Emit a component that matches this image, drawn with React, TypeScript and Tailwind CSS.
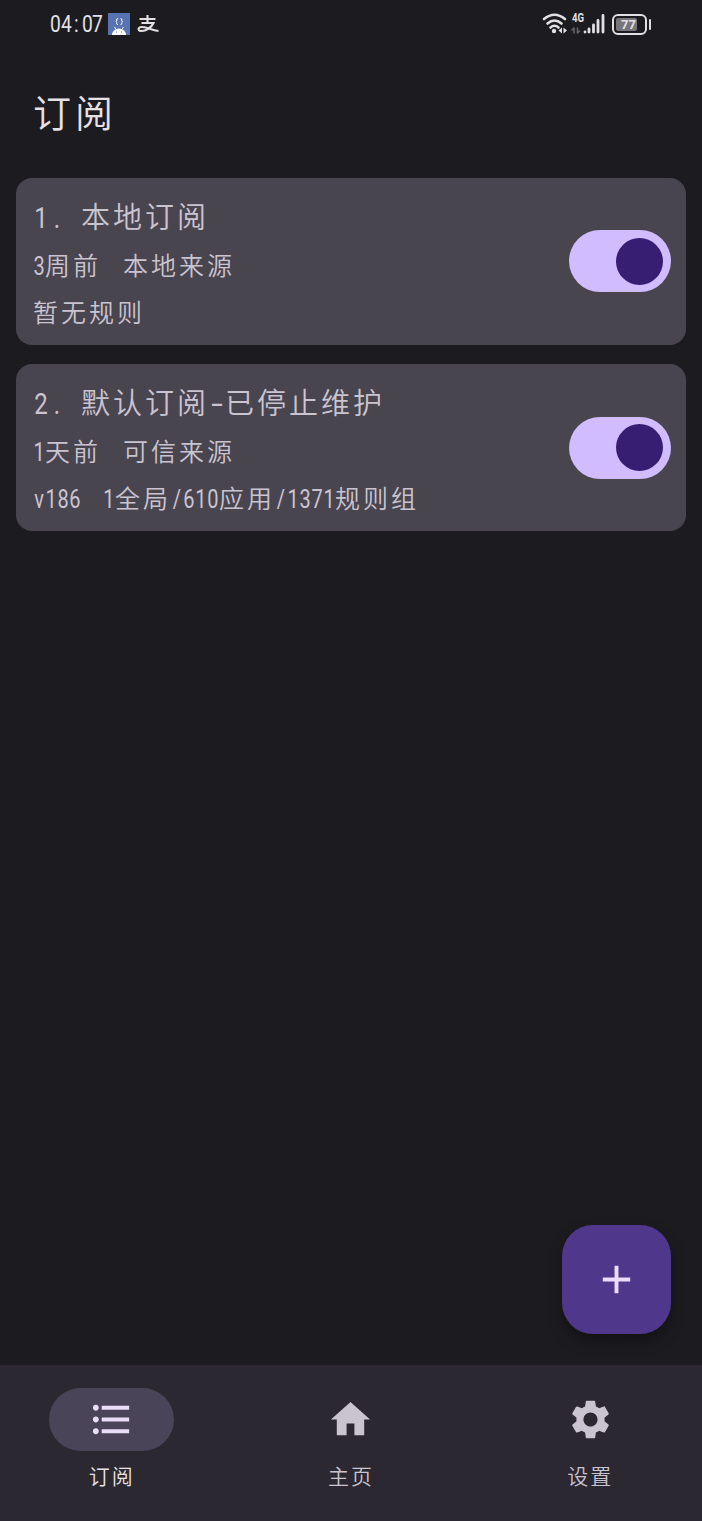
import { useState } from "react";
import clsx from "clsx";
import type { IconType } from "react-icons";
import { MdAdd, MdFormatListBulleted, MdHome, MdSettings } from "react-icons/md";

type Subscription = { title: string; time: string; source: string; rules: string; version?: string };

const subscriptions: Subscription[] = [
    { title: "1. 本地订阅", time: "3周前", source: "本地来源", rules: "暂无规则" },
    {
        title: "2. 默认订阅-已停止维护",
        time: "1天前",
        source: "可信来源",
        version: "v186",
        rules: "1全局/610应用/1371规则组",
    },
];

const tabs: { label: string; icon: IconType }[] = [
    { label: "订阅", icon: MdFormatListBulleted },
    { label: "主页", icon: MdHome },
    { label: "设置", icon: MdSettings },
];

// Latin characters sit in half-width cells next to the full-width Chinese ones
function MixedText({ text, cell, className }: { text: string; cell: string; className?: string }) {
    return (
        <span className={clsx("whitespace-pre", className)}>
            {text.split(/([\x20-\x7e])/).map((part, index) =>
                /^[\x20-\x7e]$/.test(part) ? (
                    <span
                        key={index}
                        className={clsx(
                            "inline-flex justify-center font-[Roboto,sans-serif] font-normal leading-none tracking-normal",
                            part === "-" ? "scale-x-[1.4]" : "scale-x-[0.8]",
                            cell,
                        )}>
                        {part}
                    </span>
                ) : (
                    part
                ),
            )}
        </span>
    );
}

function StatusBar() {
    return (
        <div className="flex h-12 items-center justify-between pl-[50px] pr-[51px] text-[#e3e0e5]">
            <div className="flex items-center">
                <MixedText text="04:07" cell="w-[10.600px] text-[24px]" className="w-[58px] leading-none" />
                <svg width="22" height="22" viewBox="0 0 22 22">
                    <path d="M0 0h22v22H0z" fill="#5873b1" />
                    <path d="M4 22a7 6.500 0 0 1 14 0z" fill="#fff" />
                    <path d="m6.500 14 2 3M15.500 14l-2 3" stroke="#fff" />
                    <path d="M10 5.500q-1.500 0-1.300 1.500v1l-.7.8.7.8v1q0 1 1.300 1M12.500 5.500q1.500 0 1.300 1.500v1l.7.8-.7.8v1q0 1-1.300 1" fill="none" stroke="#fff" />
                    <path d="M8 19h1M13 19h1" stroke="#5873b1" />
                </svg>
                <svg className="ml-[7px]" width="22" height="20" viewBox="0 0 22 20" fill="none" stroke="currentColor" strokeWidth="2.100">
                    <path d="M2.500 5h16M10.500 1v7.500M4.500 9h12C14.500 13.500 9 17.500 3.500 17c-3.500-.8-2-4.500 2-4C11 13.500 15 16.500 21.500 17" />
                </svg>
            </div>
            <div className="flex items-center">
                <svg width="64" height="34" viewBox="0 -5 64 34" fill="none" stroke="currentColor" strokeLinecap="round">
                    <path d="M2 7q10.500-8.500 21 0M5.500 11.500q7-6 14 0M8.500 15.500q4-3.500 8 0" strokeWidth="2.600" />
                    <circle cx="12" cy="19" r="2.200" fill="currentColor" stroke="none" />
                    <path d="m16.500 18.500 3.500-3v6zM21.500 15.500v6l3.500-3z" fill="currentColor" stroke="none" />
                    <path d="M32 16v5M32 16l-2 2M35.500 21v-5M35.500 21l2-2" stroke="#66636a" strokeWidth="1.600" />
                    <path d="M43 19.800v.2M47 17v3M51.500 13v7M56 8.500V20M61 3.500V20" strokeWidth="2.800" />
                    <text
                        x="30"
                        y="10"
                        textLength="12"
                        lengthAdjust="spacingAndGlyphs"
                        className="fill-current stroke-none font-[Roboto,sans-serif] text-[13px] font-bold">
                        4G
                    </text>
                </svg>
                <div className="ml-[6px] flex h-[21px] w-[35px] items-center rounded-[6px] border-2 border-current p-[2px]">
                    <div className="h-full w-[21px] rounded-[2px] bg-[#77747a] pl-[5px] font-[Roboto,sans-serif] text-[13px] font-bold leading-[13px]">
                        77
                    </div>
                </div>
                <div className="ml-[2px] h-[11px] w-[2px] rounded-full bg-current" />
            </div>
        </div>
    );
}

function Toggle() {
    const [checked, setChecked] = useState(true);
    return (
        <button
            type="button"
            role="switch"
            aria-checked={checked}
            onClick={() => setChecked(!checked)}
            className={clsx(
                "flex h-[62px] w-[102px] flex-none items-center rounded-full px-2",
                checked ? "justify-end bg-[#d0bcff]" : "bg-[#36343b]",
            )}>
            <span className="size-[47px] rounded-full bg-[#381e72]" />
        </button>
    );
}

function SubscriptionCard({ item }: { item: Subscription }) {
    const smallCell = "w-[12px] text-[25px]";
    return (
        <li className="flex h-[167px] items-center justify-between rounded-[16px] bg-[#49454f] pl-[17px] pr-[15px] text-[#cac4d0]">
            <div className="flex flex-col pt-[3px]">
                <MixedText
                    text={item.title}
                    className="text-[29px] leading-[49px] tracking-[3px]"
                    cell="w-[16px] text-[30px]"
                />
                <div className="flex flex-col pt-px text-[25px] leading-[47px] tracking-[3px]">
                    <div className="flex gap-[22px]">
                        <MixedText text={item.time} cell={smallCell} />
                        <MixedText text={item.source} cell={smallCell} />
                    </div>
                    <div className="flex gap-[22px]">
                        {item.version && <MixedText text={item.version} cell={smallCell} />}
                        <MixedText text={item.rules} cell={smallCell} />
                    </div>
                </div>
            </div>
            <Toggle />
        </li>
    );
}

export default function App() {
    const [activeTab, setActiveTab] = useState(0);

    return (
        <div className="flex h-[1521px] w-[702px] flex-col overflow-hidden bg-[#1c1b1f] font-['Noto_Sans_CJK_SC',sans-serif] font-[350]">
            <StatusBar />
            <h1 className="h-[129.500px] pl-[33px] text-[38px] leading-[126px] tracking-[4px] text-[#e6e1e5]">订阅</h1>
            <main className="flex flex-1 flex-col justify-between">
                <ul className="flex flex-col gap-[19.500px] px-4">
                    {subscriptions.map((item) => (
                        <SubscriptionCard key={item.title} item={item} />
                    ))}
                </ul>
                <button
                    type="button"
                    aria-label="添加"
                    className="mb-[31.500px] mr-[31.500px] flex size-[109px] items-center justify-center self-end rounded-[31px] bg-[#4f378b] text-[#eaddff] shadow-[0_7px_14px_rgba(0,0,0,0.35)]">
                    <MdAdd size={47} />
                </button>
            </main>
            <nav className="flex h-[156px] gap-[16px] bg-[#2b2831]">
                {tabs.map(({ label, icon: Icon }, index) => (
                    <button
                        key={label}
                        type="button"
                        onClick={() => setActiveTab(index)}
                        className={clsx(
                            "flex flex-1 flex-col items-center pt-[23px]",
                            index === activeTab ? "text-[#e6e1e5]" : "text-[#cac4d0]",
                        )}>
                        <span
                            className={clsx(
                                "flex h-[62.500px] w-[124.500px] items-center justify-center rounded-full",
                                index === activeTab && "bg-[#4a4458] text-[#e8def8]",
                            )}>
                            <Icon size={47} />
                        </span>
                        <span className="mt-[6.500px] text-[21px] leading-[36px] tracking-[2px]">{label}</span>
                    </button>
                ))}
            </nav>
        </div>
    );
}
